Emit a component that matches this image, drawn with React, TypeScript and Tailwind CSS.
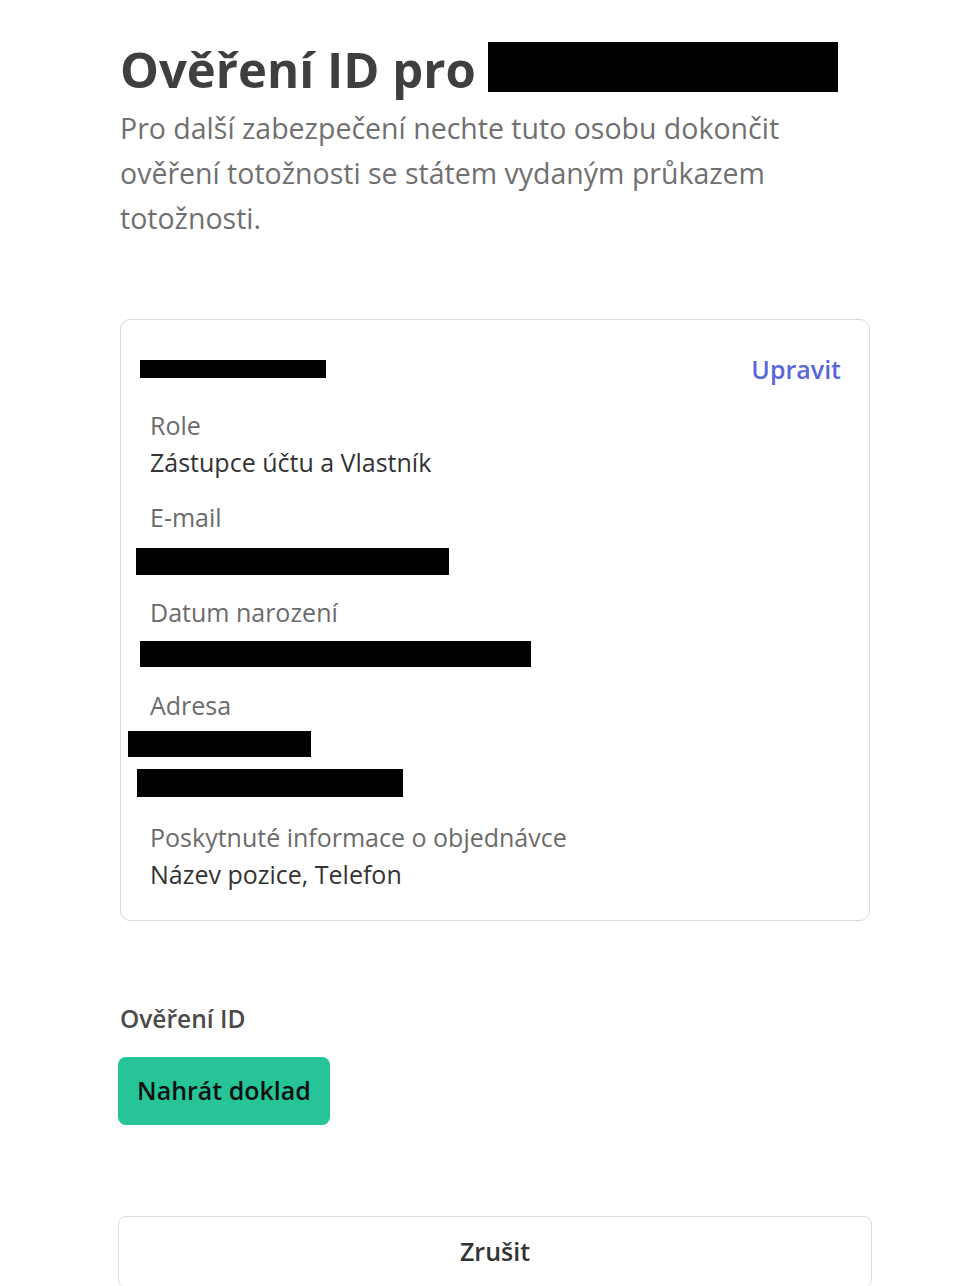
import React from "react";

const font = { fontFamily: '"Open Sans", "Noto Sans", Arial, sans-serif' };

function Redact({ className }: { className: string }) {
  return <div className={`bg-black ${className}`} />;
}

function Field({ label, children }: { label: string; children: React.ReactNode }) {
  return (
    <div className="flex flex-col">
      <div className="text-[25px] leading-[37px] text-[#6b6b6b]">{label}</div>
      {children}
    </div>
  );
}

export default function App() {
  return (
    <div className="min-h-screen bg-white" style={font}>
      <div className="ml-[120px] w-[751px] pt-[38px]">
        <div className="flex items-end">
          <h1 className="text-[49px] font-bold leading-[62px] text-[#3f3f3f]">Ověření ID pro</h1>
          <Redact className="ml-[12px] mb-[8px] h-[50px] w-[350px]" />
        </div>
        <p className="mt-[6px] w-[700px] text-[28.5px] leading-[45px] text-[#707070]">
          Pro další zabezpečení nechte tuto osobu dokončit ověření totožnosti se státem vydaným
          průkazem totožnosti.
        </p>

        <div className="mt-[78px] w-[750px] rounded-[10px] border border-[#dadada] pl-[29px] pr-[28px] pt-[31px] pb-[27px]">
          <div className="flex h-[36px] items-center justify-between">
            <Redact className="-ml-[10px] h-[18px] w-[186px]" />
            <span className="text-[25px] font-semibold leading-[36px] text-[#5a67d8]">Upravit</span>
          </div>

          <div className="mt-[20px] flex flex-col gap-[18px]">
            <Field label="Role">
              <div className="text-[25px] leading-[37px] text-[#333333]">Zástupce účtu a Vlastník</div>
            </Field>
            <Field label="E-mail">
              <div className="h-[40px] pt-[12px]">
                <Redact className="-ml-[14px] h-[27px] w-[313px]" />
              </div>
            </Field>
            <Field label="Datum narození">
              <div className="h-[38px] pt-[10px]">
                <Redact className="-ml-[10px] h-[26px] w-[391px]" />
              </div>
            </Field>
            <Field label="Adresa">
              <div className="flex h-[77px] flex-col gap-[12px] pt-[7px]">
                <Redact className="-ml-[22px] h-[26px] w-[183px]" />
                <Redact className="-ml-[13px] h-[28px] w-[266px]" />
              </div>
            </Field>
            <Field label="Poskytnuté informace o objednávce">
              <div className="text-[25px] leading-[37px] text-[#333333]">Název pozice, Telefon</div>
            </Field>
          </div>
        </div>

        <div className="mt-[80px] text-[24.5px] font-semibold leading-[36px] text-[#4a4a4a]">Ověření ID</div>
        <button className="-ml-[2px] mt-[20px] h-[68px] w-[212px] rounded-[8px] bg-[#26c497] text-[25px] font-semibold text-[#111111]">
          Nahrát doklad
        </button>

        <button className="-ml-[2px] mt-[91px] h-[72px] w-[754px] rounded-[8px] border border-[#d9dbe2] bg-white text-[25px] font-semibold text-[#333333]">
          Zrušit
        </button>
      </div>
    </div>
  );
}
